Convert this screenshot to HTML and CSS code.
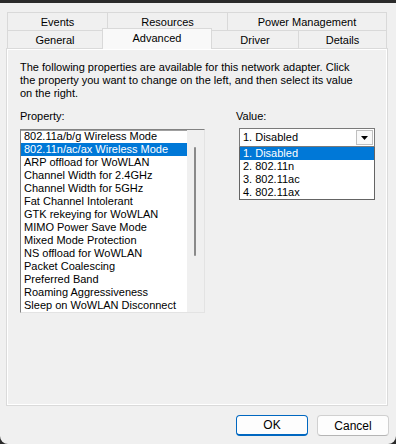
FILE: index.html
```html
<!DOCTYPE html>
<html lang="en">
<head>
    <meta charset="UTF-8">
    <meta name="viewport" content="width=device-width, initial-scale=1.0">
    <title>Adapter Properties - Advanced</title>
    <link rel="stylesheet" href="styles.css">
</head>
<body>
    <div class="window">
        <div class="tabs">
            <div class="tab-row">
                <div class="tab w-events">Events</div>
                <div class="tab w-resources">Resources</div>
                <div class="tab w-power">Power Management</div>
            </div>
            <div class="tab-row">
                <div class="tab w-general">General</div>
                <div class="tab selected w-advanced">Advanced</div>
                <div class="tab w-driver">Driver</div>
                <div class="tab w-details">Details</div>
            </div>
        </div>

        <div class="panel">
            <p class="desc">The following properties are available for this network adapter. Click<br>the property you want to change on the left, and then select its value<br>on the right.</p>

            <div class="fields">
                <div class="field-prop">
                    <div class="label">Property:</div>
                    <div class="listbox">
                        <ul class="items">
                            <li>802.11a/b/g Wireless Mode</li>
                            <li class="active">802.11n/ac/ax Wireless Mode</li>
                            <li>ARP offload for WoWLAN</li>
                            <li>Channel Width for 2.4GHz</li>
                            <li>Channel Width for 5GHz</li>
                            <li>Fat Channel Intolerant</li>
                            <li>GTK rekeying for WoWLAN</li>
                            <li>MIMO Power Save Mode</li>
                            <li>Mixed Mode Protection</li>
                            <li>NS offload for WoWLAN</li>
                            <li>Packet Coalescing</li>
                            <li>Preferred Band</li>
                            <li>Roaming Aggressiveness</li>
                            <li>Sleep on WoWLAN Disconnect</li>
                        </ul>
                        <div class="scrollbar"><div class="thumb"></div></div>
                    </div>
                </div>

                <div class="field-value">
                    <div class="label">Value:</div>
                    <div class="combo">
                        <span class="combo-text">1. Disabled</span>
                        <span class="combo-btn">
                            <svg width="7" height="4" viewBox="0 0 7 4"><path d="M0 0h7L3.5 4z" fill="#000"/></svg>
                        </span>
                    </div>
                    <ul class="dropdown">
                        <li class="active">1. Disabled</li>
                        <li>2. 802.11n</li>
                        <li>3. 802.11ac</li>
                        <li>4. 802.11ax</li>
                    </ul>
                </div>
            </div>
        </div>

        <div class="buttons">
            <button class="btn default">OK</button>
            <button class="btn">Cancel</button>
        </div>
    </div>
</body>
</html>
```

FILE: styles.css
```css
body {
    margin: 0;
    padding: 0;
    background: #2b2b2b;
    font-family: 'Liberation Sans', Arial, sans-serif;
    font-size: 11px;
    color: #000;
}
.window {
    margin-top: 3px;
    height: 441px;
    background: #f0f0f0;
    border-radius: 0 0 8px 8px;
    overflow: hidden;
}
.tabs {
    padding-top: 9px;
    margin-left: 7px;
}
.tab-row {
    display: flex;
    align-items: flex-start;
}
.tab {
    box-sizing: border-box;
    height: 18px;
    line-height: 19px;
    text-align: center;
    border-top: 1px solid #d9d9d9;
    border-left: 1px solid #d9d9d9;
    background: #f0f0f0;
    overflow: hidden;
}
.tab:last-child {
    border-right: 1px solid #d9d9d9;
}
.tab.selected {
    position: relative;
    z-index: 1;
    height: 21px;
    line-height: 18px;
    margin-top: -2px;
    margin-bottom: -1px;
    background: #f9f9f9;
    border-right: 1px solid #d9d9d9;
}
.tab.selected + .tab {
    border-left: none;
}
.w-events { width: 100px; }
.w-resources { width: 120px; }
.w-power { width: 160px; }
.w-general { width: 95px; }
.w-advanced { width: 110px; }
.w-driver { width: 86px; }
.w-details { width: 89px; }

.panel {
    box-sizing: border-box;
    margin-left: 6px;
    width: 382px;
    height: 358px;
    border: 1px solid #dadada;
    box-shadow: inset 1px 1px #fff, inset -1px -1px #fff;
    padding: 12px 0 0 13px;
}
.desc {
    margin: 0 0 10px;
    line-height: 13px;
}
.fields {
    display: flex;
}
.label {
    line-height: 13px;
}
.field-prop {
    width: 185px;
}
.field-value {
    margin-left: 31px;
}
.listbox {
    display: flex;
    box-sizing: border-box;
    margin-top: 6px;
    width: 185px;
    height: 184px;
    background: #fff;
    border: 1px solid;
    border-color: #828282 #e3e3e3 #e3e3e3 #828282;
    box-shadow: inset 0 1px #a0a0a0;
}
.items {
    list-style: none;
    margin: 0;
    padding: 0;
    width: 166px;
}
.items li,
.dropdown li {
    height: 13px;
    line-height: 13px;
    padding-left: 3px;
    white-space: nowrap;
}
.items li.active,
.dropdown li.active {
    background: #0078d7;
    color: #fff;
}
.scrollbar {
    flex: 1;
    background: #f0f0f0;
    padding-top: 17px;
}
.thumb {
    width: 2px;
    height: 109px;
    margin-left: 7px;
    background: #8a8a8a;
    border-radius: 1px;
}
.combo {
    display: flex;
    box-sizing: border-box;
    margin: 5px 0 0 3px;
    width: 136px;
    height: 19px;
    background: #fff;
    border: 1px solid #7a7a7a;
}
.combo-text {
    flex: 1;
    line-height: 17px;
    padding-left: 3px;
}
.combo-btn {
    display: flex;
    align-items: center;
    justify-content: center;
    box-sizing: border-box;
    width: 17px;
    margin: 1px;
    background: #f9f9f9;
    border: 1px solid #c0c0c0;
}
.dropdown {
    list-style: none;
    box-sizing: border-box;
    margin: 0 0 0 3px;
    padding: 0;
    width: 136px;
    background: #fff;
    border: 1px solid #646464;
    border-top: none;
}
.buttons {
    display: flex;
    justify-content: flex-end;
    gap: 9px;
    margin-top: 9px;
    padding-right: 7px;
}
.btn {
    width: 72px;
    height: 21px;
    padding: 0;
    font-family: 'Liberation Sans', Arial, sans-serif;
    font-size: 12px;
    color: #000;
    background: #fdfdfd;
    border: 1px solid #d0d0d0;
    border-bottom-color: #b5b5b5;
    border-radius: 4px;
}
.btn.default {
    border: 1px solid #0067c0;
    border-bottom-width: 2px;
}
```
